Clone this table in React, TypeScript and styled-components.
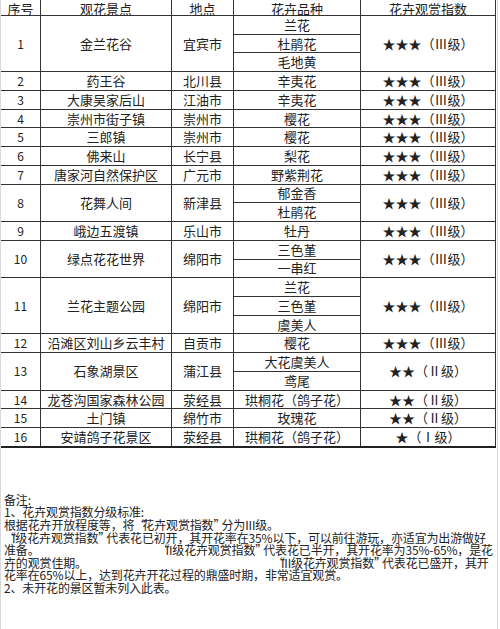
import React from 'react'
import styled, { createGlobalStyle } from 'styled-components'

const GlobalStyle = createGlobalStyle`
  html, body {
    margin: 0;
    padding: 0;
    background: #ffffff;
  }
`

const Page = styled.div`
  width: 496px;
  min-height: 629px;
  border-left: 1px solid #d9d9d9;
  border-right: 1px solid #d9d9d9;
  background: #ffffff;
  color: #222222;
  font-family: 'Noto Sans CJK SC', 'Noto Sans', sans-serif;
  overflow: hidden;
`

const Table = styled.table`
  width: 495px;
  margin-left: -1px;
  table-layout: fixed;
  border-collapse: collapse;
  border-bottom: 2px solid #222222;
  font-size: 13px;
`

const HeadCell = styled.th`
  height: 15px;
  padding: 0;
  font-weight: 400;
  line-height: 13px;
  text-align: center;
  vertical-align: bottom;
  border: 1px solid #333333;
  border-top: none;
`

const Cell = styled.td<{ $small?: boolean }>`
  height: 17.74px;
  padding: 0;
  text-align: center;
  vertical-align: middle;
  white-space: nowrap;
  line-height: 14px;
  font-size: ${(p) => (p.$small ? '12px' : '13px')};
  border: 1px solid #333333;
`

const Notes = styled.div`
  padding: 46px 0 20px 3px;
  font-size: 12px;
  line-height: 12.6px;
  letter-spacing: -0.15px;
`

const Line = styled.div`
  white-space: nowrap;
`

const Gap = styled.span<{ $w: number }>`
  display: inline-block;
  width: ${(p) => p.$w}px;
`

const Quote = styled.span`
  display: inline-block;
  width: 8px;
  text-align: center;
`

type Spot = {
  no: number
  name: string
  place: string
  flowers: string[]
  level: 1 | 2 | 3
}

const spots: Spot[] = [
  { no: 1, name: '金兰花谷', place: '宜宾市', flowers: ['兰花', '杜鹃花', '毛地黄'], level: 3 },
  { no: 2, name: '药王谷', place: '北川县', flowers: ['辛夷花'], level: 3 },
  { no: 3, name: '大康吴家后山', place: '江油市', flowers: ['辛夷花'], level: 3 },
  { no: 4, name: '崇州市街子镇', place: '崇州市', flowers: ['樱花'], level: 3 },
  { no: 5, name: '三郎镇', place: '崇州市', flowers: ['樱花'], level: 3 },
  { no: 6, name: '佛来山', place: '长宁县', flowers: ['梨花'], level: 3 },
  { no: 7, name: '唐家河自然保护区', place: '广元市', flowers: ['野紫荆花'], level: 3 },
  { no: 8, name: '花舞人间', place: '新津县', flowers: ['郁金香', '杜鹃花'], level: 3 },
  { no: 9, name: '峨边五渡镇', place: '乐山市', flowers: ['牡丹'], level: 3 },
  { no: 10, name: '绿点花花世界', place: '绵阳市', flowers: ['三色堇', '一串红'], level: 3 },
  { no: 11, name: '兰花主题公园', place: '绵阳市', flowers: ['兰花', '三色堇', '虞美人'], level: 3 },
  { no: 12, name: '沿滩区刘山乡云丰村', place: '自贡市', flowers: ['樱花'], level: 3 },
  { no: 13, name: '石象湖景区', place: '蒲江县', flowers: ['大花虞美人', '鸢尾'], level: 2 },
  { no: 14, name: '龙苍沟国家森林公园', place: '荥经县', flowers: ['珙桐花（鸽子花）'], level: 2 },
  { no: 15, name: '土门镇', place: '绵竹市', flowers: ['玫瑰花'], level: 2 },
  { no: 16, name: '安靖鸽子花景区', place: '荥经县', flowers: ['珙桐花（鸽子花）'], level: 1 },
]

const numerals = ['', 'Ⅰ', 'Ⅱ', 'Ⅲ']

const rating = (level: number) => `${'★'.repeat(level)}（${numerals[level]}级）`

// “quoted” term with wide quote marks, as in the source document
const Quoted = ({ children }: { children: React.ReactNode }) => (
  <>
    <Quote>“</Quote>
    {children}
    <Quote>”</Quote>
  </>
)

export default function App() {
  return (
    <Page>
      <GlobalStyle />
      <Table>
        <colgroup>
          <col style={{ width: 40 }} />
          <col style={{ width: 131 }} />
          <col style={{ width: 62 }} />
          <col style={{ width: 127 }} />
          <col style={{ width: 135 }} />
        </colgroup>
        <thead>
          <tr>
            <HeadCell>序号</HeadCell>
            <HeadCell>观花景点</HeadCell>
            <HeadCell>地点</HeadCell>
            <HeadCell>花卉品种</HeadCell>
            <HeadCell>花卉观赏指数</HeadCell>
          </tr>
        </thead>
        <tbody>
          {spots.map((spot) =>
            spot.flowers.map((flower, i) => (
              <tr key={`${spot.no}-${i}`}>
                {i === 0 && (
                  <>
                    <Cell rowSpan={spot.flowers.length} $small>
                      {spot.no}
                    </Cell>
                    <Cell rowSpan={spot.flowers.length}>{spot.name}</Cell>
                    <Cell rowSpan={spot.flowers.length}>{spot.place}</Cell>
                  </>
                )}
                <Cell>{flower}</Cell>
                {i === 0 && <Cell rowSpan={spot.flowers.length}>{rating(spot.level)}</Cell>}
              </tr>
            ))
          )}
        </tbody>
      </Table>
      <Notes>
        <Line>备注:</Line>
        <Line>1、花卉观赏指数分级标准:</Line>
        <Line>
          根据花卉开放程度等，将<Quoted>花卉观赏指数</Quoted>分为III级。
        </Line>
        <Line>
          <Quoted>I级花卉观赏指数</Quoted>代表花已初开，其开花率在35%以下，可以前往游玩，亦适宜为出游做好
        </Line>
        <Line>
          准备。
          <Gap $w={118} />
          <Quoted>II级花卉观赏指数</Quoted>代表花已半开，其开花率为35%-65%，是花
        </Line>
        <Line>
          卉的观赏佳期。
          <Gap $w={186} />
          <Quoted>III级花卉观赏指数</Quoted>代表花已盛开，其开
        </Line>
        <Line>花率在65%以上，达到花卉开花过程的鼎盛时期，非常适宜观赏。</Line>
        <Line>2、未开花的景区暂未列入此表。</Line>
      </Notes>
    </Page>
  )
}
